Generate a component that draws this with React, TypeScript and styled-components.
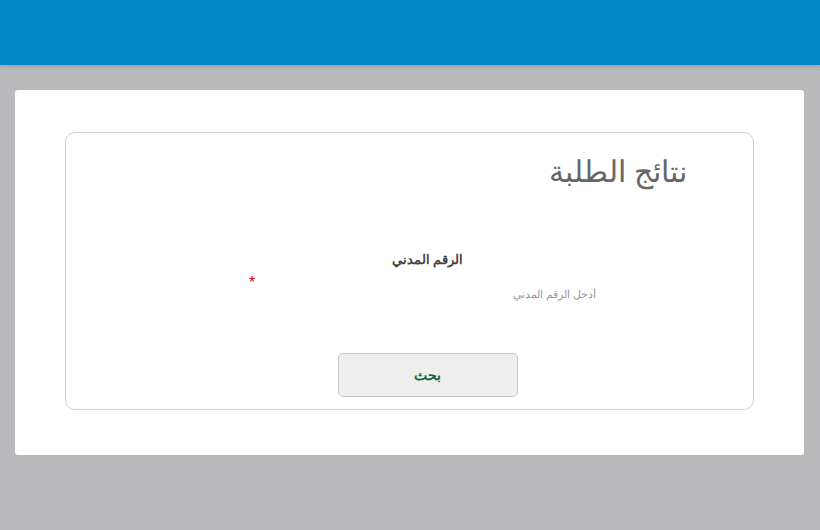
import React from 'react';
import styled, { createGlobalStyle } from 'styled-components';

const GlobalStyle = createGlobalStyle`
  html, body {
    margin: 0;
    padding: 0;
    background: #b9b9bb;
    font-family: 'Liberation Sans', Arial, sans-serif;
  }
`;

const Header = styled.header`
  height: 65px;
  background: #0086c4;
  box-shadow: 0 2px 3px rgba(0, 0, 0, 0.12);
`;

const Page = styled.main`
  padding: 25px 16px 0 15px;
`;

const Panel = styled.section`
  background: #fff;
  border-radius: 3px;
  padding: 42px 50px 45px;
`;

const Card = styled.div`
  direction: rtl;
  border: 1px solid #cfcfcf;
  border-radius: 10px;
  padding: 18px 0 12px;
`;

const Title = styled.h1`
  margin: 0;
  padding-right: 66px;
  font-size: 30px;
  font-weight: normal;
  line-height: 42px;
  color: #666;
`;

const Form = styled.form`
  display: flex;
  flex-direction: column;
  align-items: center;
  padding-left: 36px;
  margin-top: 57px;
`;

const Label = styled.label`
  font-size: 13px;
  font-weight: bold;
  color: #444;
  line-height: 20px;
`;

const FieldRow = styled.div`
  position: relative;
  width: 345px;
  margin-top: 4px;
`;

const Input = styled.input`
  box-sizing: border-box;
  width: 100%;
  height: 34px;
  border: none;
  outline: none;
  padding: 6px 4px 0;
  font-family: inherit;
  font-size: 11px;
  color: #333;
  background: transparent;
  direction: rtl;
  &::placeholder {
    color: #9a9a9a;
  }
`;

const Required = styled.span`
  position: absolute;
  left: -6px;
  top: 0;
  color: #d00;
  font-size: 16px;
`;

const SearchButton = styled.button`
  margin-top: 45px;
  width: 180px;
  height: 44px;
  background: #eee;
  border: 1px solid #c6c6c6;
  border-radius: 5px;
  font-family: inherit;
  font-size: 14px;
  font-weight: bold;
  color: #146b3a;
  cursor: pointer;
`;

export default function App() {
  return (
    <>
      <GlobalStyle />
      <Header />
      <Page>
        <Panel>
          <Card>
            <Title>نتائج الطلبة</Title>
            <Form onSubmit={(e) => e.preventDefault()}>
              <Label htmlFor="civil">الرقم المدني</Label>
              <FieldRow>
                <Input id="civil" placeholder="أدخل الرقم المدني" />
                <Required>*</Required>
              </FieldRow>
              <SearchButton type="submit">بحث</SearchButton>
            </Form>
          </Card>
        </Panel>
      </Page>
    </>
  );
}
